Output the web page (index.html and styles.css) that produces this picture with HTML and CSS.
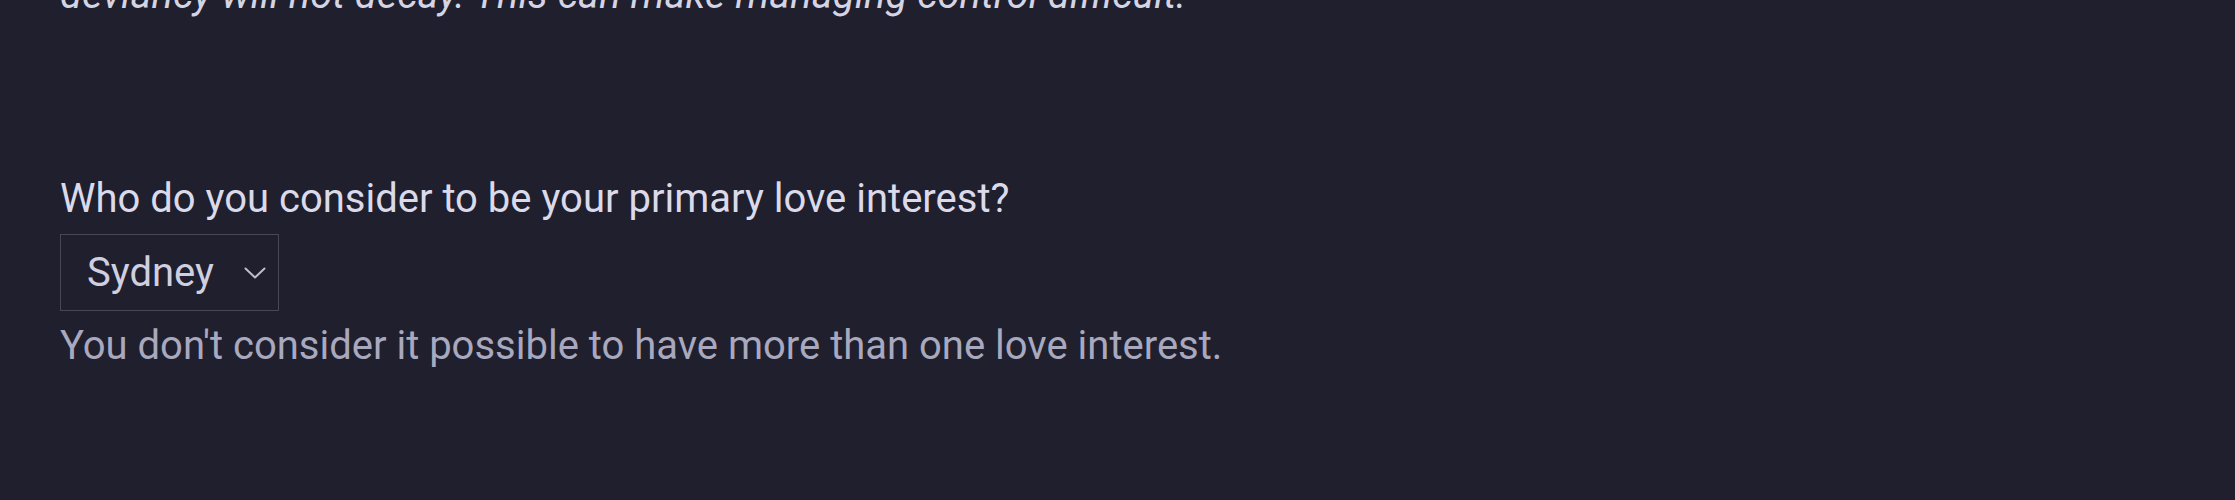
FILE: index.html
```html
<!DOCTYPE html>
<html lang="en">
<head>
<meta charset="utf-8">
<title>Love interest</title>
<link rel="stylesheet" href="styles.css">
</head>
<body>
<main class="page">
  <p class="note">deviancy will not decay. This can make managing control difficult.</p>
  <section class="field">
    <label class="field-label" for="love">Who do you consider to be your primary love interest?</label>
    <div class="select">
      <span class="select-value" id="love">Sydney</span>
      <svg class="chevron" width="22" height="12" viewBox="0 0 22 12" aria-hidden="true"><path d="M1.5 1.5 L11 10.5 L20.5 1.5" fill="none" stroke="currentColor" stroke-width="2" stroke-linecap="round" stroke-linejoin="round"/></svg>
    </div>
    <p class="field-help">You don't consider it possible to have more than one love interest.</p>
  </section>
</main>
</body>
</html>
```
FILE: styles.css
```css
html, body {
  margin: 0;
  padding: 0;
  background: #1f1f2e;
  height: 100%;
}
.page {
  padding: 0 0 0 60px;
  font-family: Roboto, "Noto Sans", sans-serif;
  font-size: 40px;
  line-height: 48px;
  overflow: hidden;
  height: 500px;
  box-sizing: border-box;
}
.note {
  margin: -29px 0 0 0;
  font-style: italic;
  color: #d4d4e4;
}
.field {
  margin-top: 156px;
  display: flex;
  flex-direction: column;
  align-items: flex-start;
}
.field-label {
  color: #dadaea;
}
.select {
  margin-top: 11px;
  box-sizing: border-box;
  width: 219px;
  height: 77px;
  border: 1px solid #474758;
  display: flex;
  align-items: center;
  padding: 0 12px 0 26px;
  gap: 30px;
  color: #cfcfe0;
}
.select-value {
  flex: 1;
}
.chevron {
  color: #bdbdcf;
  flex: none;
}
.field-help {
  margin: 11px 0 0 0;
  color: #a8a8be;
}
```
